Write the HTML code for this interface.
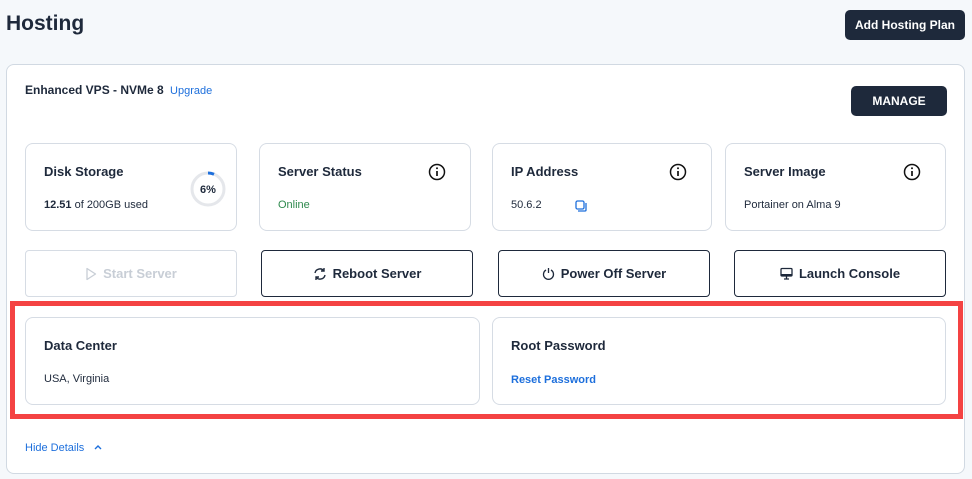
<!DOCTYPE html>
<html><head><meta charset="utf-8"><style>
*{box-sizing:border-box;margin:0;padding:0}
body{width:972px;height:479px;background:#f5f8fb;font-family:"Liberation Sans",sans-serif;color:#1e293b;position:relative;overflow:hidden}
.a{position:absolute}
h1{position:absolute;left:6px;top:12px;font-size:21px;font-weight:600;color:#1e293b}
.btnd{background:#1e293b;color:#fff;font-weight:700;font-size:12px;border-radius:5px;display:flex;align-items:center;justify-content:center}
.card{position:absolute;left:6px;top:64px;width:959px;height:410px;background:#fff;border:1px solid #d1d9e2;border-radius:8px}
.box{position:absolute;border:1px solid #d6dce4;border-radius:8px;background:#fff}
.t{position:absolute;left:18px;top:20px;font-size:13px;font-weight:600;color:#1e293b}
.v{position:absolute;left:18px;top:55px;font-size:11px;color:#1e293b}
.info{position:absolute;right:24px;top:19px;width:18px;height:18px}
.ob{position:absolute;border:1px solid #1e293b;border-radius:4px;display:flex;align-items:center;justify-content:center;font-size:13px;font-weight:700;gap:6px;background:#fff}
</style></head><body>
<h1>Hosting</h1>
<div class="a btnd" style="left:845px;top:10px;width:120px;height:30px">Add Hosting Plan</div>
<div class="card"></div>
<div class="a" style="left:25px;top:83px;font-size:12px;font-weight:600">Enhanced VPS - NVMe 8 <span style="color:#1d6fdc;font-weight:400;font-size:11px;margin-left:3px">Upgrade</span></div>
<div class="a btnd" style="left:851px;top:86px;width:96px;height:30px">MANAGE</div>

<div class="box" style="left:25px;top:143px;width:212px;height:88px"><div class="t">Disk Storage</div><div class="v"><b>12.51</b> of 200GB used</div>
<svg class="a" style="left:164px;top:27px" width="36" height="36"><circle cx="18" cy="18" r="16" fill="none" stroke="#e5e7eb" stroke-width="3"/><path d="M18 2 A16 16 0 0 1 24 3.2" fill="none" stroke="#1d6fdc" stroke-width="3"/><text x="18" y="22" text-anchor="middle" font-size="11" font-weight="700" fill="#1e293b" font-family="Liberation Sans">6%</text></svg></div>
<div class="box" style="left:259px;top:143px;width:212px;height:88px"><div class="t">Server Status</div><div class="v" style="color:#2f8a4e">Online</div>
<svg class="info" viewBox="0 0 18 18"><circle cx="9" cy="9" r="7.5" fill="none" stroke="#111" stroke-width="1.5"/><circle cx="9" cy="5.3" r="1" fill="#111"/><path d="M9 8v5" stroke="#111" stroke-width="1.7"/></svg></div>
<div class="box" style="left:492px;top:143px;width:220px;height:88px"><div class="t">IP Address</div><div class="v">50.6.2</div>
<svg class="a" style="left:82px;top:56px" width="12" height="12" viewBox="0 0 12 12"><rect x="1" y="1" width="8" height="8" rx="1.5" fill="none" stroke="#1d6fdc" stroke-width="1.3"/><path d="M11 3v7a1 1 0 0 1-1 1H3" fill="none" stroke="#1d6fdc" stroke-width="1.3"/></svg>
<svg class="info" viewBox="0 0 18 18"><circle cx="9" cy="9" r="7.5" fill="none" stroke="#111" stroke-width="1.5"/><circle cx="9" cy="5.3" r="1" fill="#111"/><path d="M9 8v5" stroke="#111" stroke-width="1.7"/></svg></div>
<div class="box" style="left:725px;top:143px;width:221px;height:88px"><div class="t">Server Image</div><div class="v">Portainer on Alma 9</div>
<svg class="info" viewBox="0 0 18 18"><circle cx="9" cy="9" r="7.5" fill="none" stroke="#111" stroke-width="1.5"/><circle cx="9" cy="5.3" r="1" fill="#111"/><path d="M9 8v5" stroke="#111" stroke-width="1.7"/></svg></div>

<div class="ob" style="left:25px;top:250px;width:212px;height:47px;border-color:#d6dce4;color:#c8ced6"><svg width="12" height="14" viewBox="0 0 12 14"><path d="M2 1.5v11l8.5-5.5z" fill="none" stroke="#c8ced6" stroke-width="1.3" stroke-linejoin="round"/></svg>Start Server</div>
<div class="ob" style="left:261px;top:250px;width:212px;height:47px"><svg width="14" height="14" viewBox="0 0 14 14"><path d="M2 6a5 5 0 0 1 9-2M12 8a5 5 0 0 1-9 2" fill="none" stroke="#1e293b" stroke-width="1.4"/><path d="M11 1v3H8M3 13v-3h3" fill="none" stroke="#1e293b" stroke-width="1.4"/></svg>Reboot Server</div>
<div class="ob" style="left:498px;top:250px;width:212px;height:47px"><svg width="13" height="13" viewBox="0 0 13 13"><path d="M4 3a5 5 0 1 0 5 0" fill="none" stroke="#1e293b" stroke-width="1.3"/><path d="M6.5 1v5" stroke="#1e293b" stroke-width="1.3"/></svg>Power Off Server</div>
<div class="ob" style="left:734px;top:250px;width:212px;height:47px"><svg width="13" height="13" viewBox="0 0 13 13"><rect x="1" y="1.5" width="11" height="7.5" rx="1" fill="none" stroke="#1e293b" stroke-width="1.3"/><rect x="1" y="7" width="11" height="2" fill="#1e293b"/><path d="M4 12h5M6.5 9v3" stroke="#1e293b" stroke-width="1.3"/></svg>Launch Console</div>

<div class="a" style="left:10px;top:301px;width:953px;height:118px;border:5px solid #f44343"></div>
<div class="box" style="left:25px;top:317px;width:455px;height:88px"><div class="t">Data Center</div><div class="v" style="top:55px">USA, Virginia</div></div>
<div class="box" style="left:492px;top:317px;width:454px;height:88px"><div class="t">Root Password</div><div class="v" style="top:56px;color:#1d6fdc;font-weight:600">Reset Password</div></div>

<div class="a" style="left:25px;top:442px;font-size:11px;color:#1d6fdc">Hide Details <svg width="10" height="8" viewBox="0 0 10 8" style="margin-left:6px"><path d="M2 6l3-3 3 3" fill="none" stroke="#1d6fdc" stroke-width="1.4"/></svg></div>
</body></html>
